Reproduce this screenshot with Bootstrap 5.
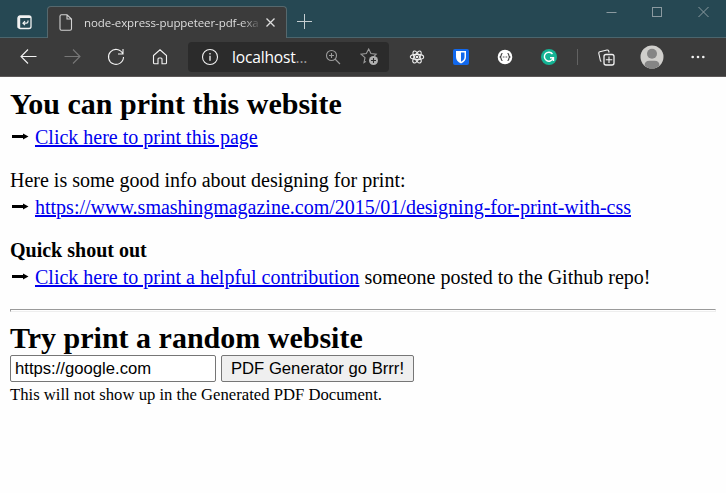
<!DOCTYPE html>
<html lang="en">
<head>
<meta charset="utf-8">
<meta name="viewport" content="width=device-width, initial-scale=1">
<title>node-express-puppeteer-pdf-example</title>
<link rel="stylesheet" href="https://cdn.jsdelivr.net/npm/bootstrap@5.3.0/dist/css/bootstrap.min.css">
<style>
body{width:726px;height:493px;overflow:hidden;background:#fefefe;color:#000;font-family:"Liberation Serif",serif;font-size:20px}
svg{display:block;flex:none;fill:none;stroke:#f2f2f2;stroke-width:1.1}
.titlebar{height:38px;background:#264853;box-shadow:inset 0 -1px #4b656d}
.tab-menu{width:48px;padding:15px 0 0 17px}
.page-tab{width:240px;height:32px;margin-top:6px;background:#3b3b3b;border:1px solid #56686d;border-bottom:0;border-radius:4px 4px 0 0;padding:0 0 0 11px;margin-left:-1px}
.tab-title{flex:none;font:11.5px "Open Sans","Noto Sans",sans-serif;letter-spacing:-.08px;color:#dedede;width:176px;margin-left:11px;-webkit-mask-image:linear-gradient(90deg,#000 157px,transparent 178px)}
.tab-close{margin-left:6px}
.new-tab{margin:14px 0 0 10px}
.win-btns{padding-top:5px}
.win-btns svg{stroke:#8b9aa0;stroke-width:1}
.win-btns>span,.tool{width:44px;display:flex;justify-content:center}
.win-btns>span{width:46px}
.toolbar{height:39px;background:#3b3b3b;border-bottom:1px solid #5c5858;padding-left:6px}
.address{width:201px;height:30px;background:#2b2b2b;border-radius:4px;margin:0 6px;padding-left:13px;color:#fff;font:15.6px "Open Sans","Noto Sans",sans-serif}
.host{width:76px;margin-left:13px;white-space:nowrap;letter-spacing:-.2px}
.host span{color:#999}
.sep{width:1px;height:16px;background:#626262;margin:0 6px 0 6px}
main{padding:9px 10px}
h1{font-size:30px;font-weight:700;line-height:35px;margin:0;padding-bottom:1px;white-space:nowrap}
p{margin:0 0 18px;line-height:23px;white-space:nowrap}
.lnk{line-height:27px;display:flex;align-items:center;height:27px;margin-top:2px}
.lnk svg{width:25px;height:11px;stroke:none;fill:#000}
.lnk a,.lnk a:hover{color:#00e;text-decoration:underline}
.rule{height:3px;border:1px solid;border-color:#9a9a9a #eee #eee #9a9a9a}
.rule+h1{margin:8px 0 0;padding:0}
.field,.go{height:27px;font:16.667px "Liberation Sans",Arial,sans-serif;color:#000;border:1px solid #767676;border-radius:2px}
.field{width:206px;padding:0 4px;background:#fff;outline:0}
.go{width:193px;padding:0;background:#efefef;margin-left:5px;white-space:nowrap}
.note{font-size:16.667px;line-height:19px;margin-top:3px}
</style>
</head>
<body>
<header>
<div class="titlebar d-flex">
  <div class="tab-menu"><svg width="15" height="15" viewBox="0 0 15 15"><rect x="1" y="1" width="13" height="12.5" rx="2" stroke-width="1.3"/><path d="M1 2h13" stroke-width="2"/><path d="M2 3v10" stroke-width="2.400"/><path d="M11 5.500v1q0 1.700-1.700 1.700H6M8 6.200 6 8.200l2 2" stroke-width="1.200"/></svg></div>
  <div class="page-tab d-flex align-items-center">
    <svg width="14" height="17" viewBox="0 0 14 17"><path d="M2.5.8H8L12.500 5v9.700q0 1.500-1.500 1.500H2.500Q1 16.200 1 14.700V2.300Q1 .8 2.500.8ZM8 .8V5h4.500" stroke="#d2d2d2"/></svg>
    <div class="tab-title text-nowrap overflow-hidden">node-express-puppeteer-pdf-exa</div>
    <svg class="tab-close" width="9" height="9" viewBox="0 0 9 9"><path d="m.5.5 8 8m0-8-8 8" stroke="#ddd" stroke-width="1.3"/></svg>
  </div>
  <svg class="new-tab" width="15" height="15" viewBox="0 0 15 15"><path d="M0 7.500h15M7.500 0v15" stroke="#c5ced1" stroke-width="1"/></svg>
  <div class="win-btns d-flex ms-auto">
    <span><svg width="11" height="14"><path d="M.5 7.500h10"/></svg></span>
    <span><svg width="11" height="14"><rect x=".5" y="2.500" width="9" height="9"/></svg></span>
    <span><svg width="11" height="14"><path d="m.5 2 10 10m0-10-10 10"/></svg></span>
  </div>
</div>
<nav class="toolbar d-flex align-items-center">
  <span class="tool"><svg width="17" height="16" viewBox="0 0 17 16"><path d="M16.500 7.500H1M8 .5l-7 7 7 7"/></svg></span>
  <span class="tool"><svg width="17" height="16" viewBox="0 0 17 16"><path d="M.5 7.500H16M9 .5l7 7-7 7" stroke="#777"/></svg></span>
  <span class="tool"><svg width="18" height="18" viewBox="0 0 18 18"><path d="M15.700 5.500A7.500 7.500 0 1 0 16.500 9M16 1v5h-5"/></svg></span>
  <span class="tool"><svg width="16" height="18" viewBox="0 0 16 18"><path d="M1.500 7.500 8 1.800l6.500 5.700v7.300q0 1-1 1H10V11q0-1-1-1H7q-1 0-1 1v4.800H2.500q-1 0-1-1Z"/></svg></span>
  <div class="address d-flex align-items-center">
    <svg width="18" height="18" viewBox="0 0 18 18"><circle cx="9" cy="9" r="7.500"/><path d="M9 7.800v5M9 5v1.500" stroke-width="1.300"/></svg>
    <div class="host">localhost<span>...</span></div>
    <svg width="16" height="16" viewBox="0 0 16 16" style="margin-left:17px"><g stroke="#9b9b9b"><circle cx="6.500" cy="6.500" r="5"/><path d="m10 10 5 5M6.500 4v5M4 6.500h5"/></g></svg>
    <svg width="19" height="18" viewBox="0 0 19 18" style="margin-left:19px"><path d="M6 13.400 4 14.700l1-5-4-3.600 5.300-.6L8.700 1l2.200 4.500 5.300.6-2 2" stroke="#9b9b9b"/><circle cx="13.500" cy="12.500" r="4.500" fill="#b0b0b0" stroke="none"/><path d="M13.500 10v5M11 12.500h5" stroke="#2b2b2b"/></svg>
  </div>
  <span class="tool"><svg width="16" height="16" viewBox="0 0 16 16"><g stroke="#eee"><ellipse cx="8" cy="8" rx="6.700" ry="2.600"/><ellipse cx="8" cy="8" rx="6.700" ry="2.600" transform="rotate(60 8 8)"/><ellipse cx="8" cy="8" rx="6.700" ry="2.600" transform="rotate(120 8 8)"/><circle cx="8" cy="8" r=".8" fill="#eee"/></g></svg></span>
  <span class="tool"><svg width="16" height="16" viewBox="0 0 16 16"><g stroke="none"><rect width="16" height="16" rx="2" fill="#1168ed"/><path d="M3 2h10v6q0 4-5 6.500Q3 12 3 8Z" fill="#fff"/><path d="M8 3.500h3.500V8q0 3-3.500 4.800Z" fill="#1168ed"/></g></svg></span>
  <span class="tool"><svg width="16" height="16" viewBox="0 0 16 16"><circle cx="8" cy="8" r="7.300" fill="#fff" stroke="none"/><path d="M5.500 4.500q-1.300 0-1.300 1.500T3.200 8q1 .5 1 2t1.300 1.500M10.500 4.500q1.300 0 1.300 1.500t1 2q-1 .5-1 2t-1.300 1.500M5.800 8h1m.8 0h.8m.8 0h1" stroke="#333"/></svg></span>
  <span class="tool"><svg width="16" height="16" viewBox="0 0 16 16"><circle cx="8" cy="8" r="8" fill="#15b394" stroke="none"/><path d="M11.500 5A4.500 4.500 0 1 0 12 9.500M9 8.700h3.500V12" stroke="#fff" stroke-width="1.400"/></svg></span>
  <span class="sep"></span>
  <span class="tool"><svg width="17" height="17" viewBox="0 0 17 17"><path d="M3.500 12.200 2.500 12 .8 4.300Q.6 3 1.800 2.700L9 1q1.300-.2 1.700 1l.4 1.500"/><rect x="6" y="5.500" width="10" height="10.500" rx="2" stroke-width="1.300"/><path d="M11 7.500v6.500M7.800 10.700h6.500"/></svg></span>
  <span class="tool" style="margin-left:2px"><svg width="24" height="24" viewBox="0 0 24 24"><g stroke="none"><circle cx="12" cy="12" r="11.500" fill="#d0cfcc"/><circle cx="12" cy="8.800" r="5" fill="#858585"/><path d="M4.500 20.700q0-5 5-5h5q5 0 5 5A11.500 11.500 0 0 1 4.500 20.700Z" fill="#858585"/></g></svg></span>
  <span class="tool" style="margin-left:2px"><svg width="14" height="4" viewBox="0 0 14 4"><g fill="#f2f2f2" stroke="none"><circle cx="1.700" cy="2" r="1.300"/><circle cx="7" cy="2" r="1.300"/><circle cx="12.300" cy="2" r="1.300"/></g></svg></span>
</nav>
</header>
<main>
  <h1>You can print this website</h1>
  <p><span class="lnk"><svg viewBox="0 0 25 11"><path d="M2 3h11V1.500L18.500 4.500 13 7.500V6H2Z"/></svg><a href="#">Click here to print this page</a></span></p>
  <p>Here is some good info about designing for print:<span class="lnk"><svg viewBox="0 0 25 11"><path d="M2 3h11V1.500L18.500 4.500 13 7.500V6H2Z"/></svg><a href="#">https://www.smashingmagazine.com/2015/01/designing-for-print-with-css</a></span></p>
  <p><b>Quick shout out</b><span class="lnk"><svg viewBox="0 0 25 11"><path d="M2 3h11V1.500L18.500 4.500 13 7.500V6H2Z"/></svg><a href="#">Click here to print a helpful contribution</a><span>&nbsp;someone posted to the Github repo!</span></span></p>
  <div class="rule"></div>
  <h1>Try print a random website</h1>
  <form class="d-flex"><input class="field" type="text" aria-label="Website" value="https://google.com"><button class="go" type="button">PDF Generator go Brrr!</button></form>
  <div class="note">This will not show up in the Generated PDF Document.</div>
</main>
<script src="https://cdn.jsdelivr.net/npm/bootstrap@5.3.0/dist/js/bootstrap.bundle.min.js"></script>
</body>
</html>
